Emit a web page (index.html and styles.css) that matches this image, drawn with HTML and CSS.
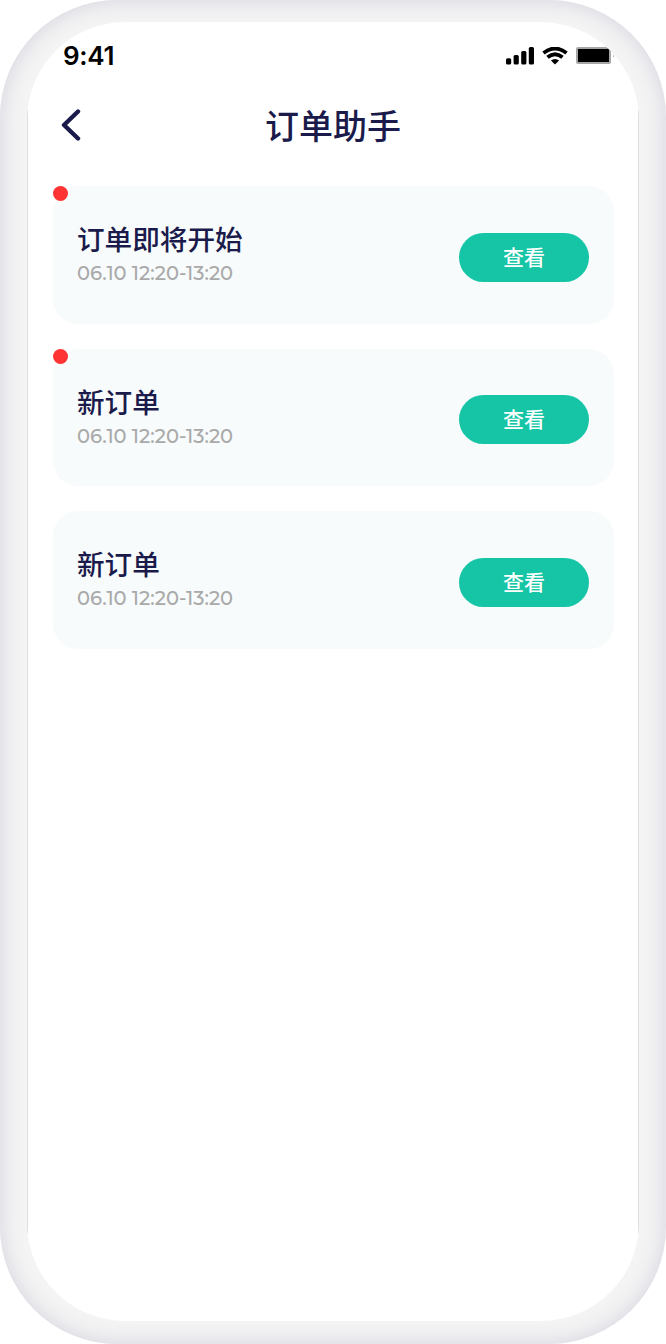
FILE: index.html
```
<!DOCTYPE html>
<html lang="zh-CN">

<head>
  <meta charset="UTF-8" />
  <meta name="viewport" content="width=device-width, initial-scale=1" />
  <title>订单助手</title>
  <link rel="stylesheet" href="styles.css">
</head>

<body>
  <div class="phone">
    <div class="screen">
      <div class="status-bar">
        <span class="time">9:41</span>
        <div class="status-icons">
          <svg class="signal" width="28" height="18" viewBox="0 0 28 18">
            <rect x="0" y="11.2" width="5.2" height="6.3" rx="1.6" />
            <rect x="7.6" y="8" width="5.2" height="9.5" rx="1.6" />
            <rect x="15.2" y="4" width="5.2" height="13.5" rx="1.6" />
            <rect x="22.8" y="0" width="5.2" height="17.5" rx="1.6" />
          </svg>
          <svg class="wifi" width="26" height="18" viewBox="0 0 26 18">
            <path d="M1.5 6Q13 -3 24.5 6M5.5 10.3Q13 4.2 20.5 10.3" fill="none" stroke="#000" stroke-width="3.8" />
            <path d="M8.9 13.6Q13 10.5 17.1 13.6L13 17.6Z" />
          </svg>
          <svg class="battery" width="40" height="18" viewBox="0 0 40 18">
            <rect x="1" y="1" width="33" height="15" rx="1" fill="#000" stroke="#a6a6a6" stroke-width="2" />
            <path d="M37 7.5v3.6q1.5-1.8 0-3.6z" fill="#999" />
          </svg>
        </div>
      </div>

      <header class="nav">
        <svg class="back" width="20" height="32" viewBox="0 0 20 32">
          <path d="M17 2.5L3 16l14 13.5" />
        </svg>
        <h1>订单助手</h1>
      </header>

      <main class="orders">
        <section class="order">
          <span class="dot"></span>
          <div class="info">
            <h2>订单即将开始</h2>
            <p>06.10 12:20-13:20</p>
          </div>
          <button>查看</button>
        </section>
        <section class="order">
          <span class="dot"></span>
          <div class="info">
            <h2>新订单</h2>
            <p>06.10 12:20-13:20</p>
          </div>
          <button>查看</button>
        </section>
        <section class="order">
          <div class="info">
            <h2>新订单</h2>
            <p>06.10 12:20-13:20</p>
          </div>
          <button>查看</button>
        </section>
      </main>
    </div>
  </div>
</body>

</html>
```
FILE: styles.css
```
* {
  box-sizing: border-box;
}

body {
  margin: 0;
  background: #fff;
  font-family: "Noto Sans CJK SC", sans-serif;
  color: #1a1a4b;
}

.phone {
  width: 666px;
  height: 1344px;
  padding: 22px 27px 23px;
  border-radius: 117px;
  background: #f4f4f4;
  box-shadow: inset 0 0 22px #d2d1dd;
}

/* thin edge lines run only along the straight sides */
.screen {
  height: 100%;
  padding: 0 25px 0 26px;
  border-radius: 98px;
  overflow: hidden;
  background:
    linear-gradient(#dedede, #dedede) left center / 1px calc(100% - 176px) no-repeat,
    linear-gradient(#dedede, #dedede) right center / 1px calc(100% - 176px) no-repeat,
    #fff;
}

.status-bar {
  display: flex;
  justify-content: space-between;
  align-items: center;
  height: 67px;
  padding-left: 10px;
}

.time {
  font-family: Inter, sans-serif;
  font-size: 26px;
  font-weight: 600;
  letter-spacing: -0.3px;
  color: #000;
}

.status-icons {
  display: flex;
  align-items: center;
  margin-right: -2px;
}

.wifi {
  margin: 0 8px;
}

.nav {
  display: flex;
  align-items: center;
  height: 72px;
  padding: 0 60px 0 8px;
}

.back path {
  fill: none;
  stroke: #1a1a4b;
  stroke-width: 4.4;
  stroke-linecap: round;
  stroke-linejoin: round;
}

h1 {
  flex: 1;
  margin: 0 0 0 31px;
  font-size: 34px;
  font-weight: 500;
  line-height: 48px;
  text-align: center;
}

.orders {
  display: flex;
  flex-direction: column;
  gap: 25px;
  padding-top: 25px;
}

.order {
  position: relative;
  display: flex;
  justify-content: space-between;
  align-items: center;
  height: 137.6px;
  padding: 4px 25px 0 24px;
  border-radius: 25px;
  background: #f7fbfc;
}

.dot {
  position: absolute;
  top: 0;
  left: 0;
  width: 15px;
  height: 15px;
  border-radius: 50%;
  background: #fe3434;
}

h2 {
  margin: 0;
  font-size: 27.6px;
  font-weight: 500;
  line-height: 34px;
}

p {
  margin: 0;
  font-family: Montserrat, Inter, sans-serif;
  font-size: 19.5px;
  font-weight: 500;
  line-height: 37px;
  color: #a9a9a9;
}

button {
  width: 130px;
  height: 49px;
  margin: 1px 0 0;
  padding: 0 0 3px;
  border: none;
  border-radius: 25px;
  background: #15c5a5;
  color: #fff;
  font-family: inherit;
  font-size: 21px;
  font-weight: 500;
}
```
